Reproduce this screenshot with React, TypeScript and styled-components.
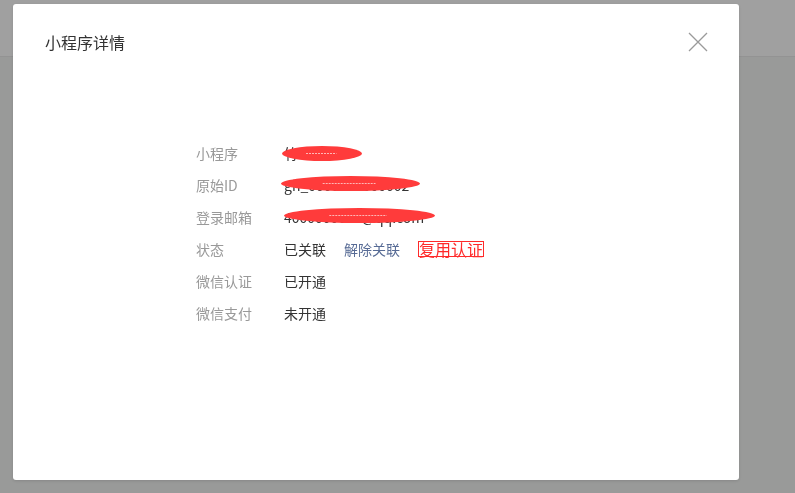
import React from 'react'
import styled, { createGlobalStyle } from 'styled-components'

const GlobalStyle = createGlobalStyle`
  html, body {
    margin: 0;
    padding: 0;
    height: 100%;
    background: #999a99;
    font-family: "Noto Sans CJK SC", "Noto Sans", "Liberation Sans", sans-serif;
  }
`

const PageHeader = styled.div`
  height: 56px;
  background: #a0a0a0;
  border-bottom: 1px solid #939393;
`

const Overlay = styled.div`
  position: fixed;
  inset: 0;
  padding: 4px 0 0 13px;
`

const Modal = styled.div`
  width: 726px;
  height: 476px;
  background: #fff;
  border-radius: 3px;
  box-shadow: 0 1px 3px rgba(0, 0, 0, 0.12);
  display: flex;
  flex-direction: column;
`

const ModalHeader = styled.div`
  display: flex;
  align-items: center;
  justify-content: space-between;
  padding: 26px 31px 0 32px;
  height: 24px;
`

const Title = styled.h3`
  margin: 0;
  font-size: 16px;
  font-weight: 400;
  color: #333;
`

const CloseButton = styled.button`
  border: none;
  background: none;
  padding: 0;
  width: 20px;
  height: 20px;
  cursor: pointer;
  display: flex;
`

const InfoList = styled.dl`
  margin: 83px 0 0 183px;
  padding: 0;
  display: grid;
  grid-template-columns: 88px auto;
  grid-auto-rows: 32px;
  align-items: center;
  font-size: 14px;
`

const Label = styled.dt`
  color: #999;
`

const Value = styled.dd`
  margin: 0;
  color: #333;
  display: flex;
  align-items: center;
`

const Masked = styled.span`
  position: relative;
  display: inline-block;
  color: #333;
  white-space: nowrap;
`

const Scribble = styled.svg<{ $w: number; $dx: number; $dy: number }>`
  position: absolute;
  left: ${p => p.$dx}px;
  top: ${p => p.$dy}px;
  width: ${p => p.$w}px;
  height: 15px;
  overflow: visible;
`

const LinkAction = styled.a`
  margin-left: 18px;
  color: #576b95;
  text-decoration: none;
  cursor: pointer;
`

const ReuseAction = styled.a`
  margin-left: 18px;
  color: #ff2a2a;
  font-size: 16px;
  line-height: 14px;
  height: 14px;
  border: 1px solid #ff2a2a;
  cursor: pointer;
`

function Redaction({ width, dx, dy }: { width: number; dx: number; dy: number }) {
  return (
    <Scribble $w={width} $dx={dx} $dy={dy} viewBox={`0 0 ${width} 15`}>
      <ellipse cx={width / 2} cy={7.5} rx={width / 2} ry={7.5} fill="#ff3b3b" />
      <line
        x1={width * 0.3}
        y1={7.5}
        x2={width * 0.68}
        y2={7.5}
        stroke="#ffd6d6"
        strokeWidth={0.8}
        strokeDasharray="2 1"
      />
    </Scribble>
  )
}

export default function App() {
  return (
    <>
      <GlobalStyle />
      <PageHeader />
      <Overlay>
        <Modal>
          <ModalHeader>
            <Title>小程序详情</Title>
            <CloseButton aria-label="关闭">
              <svg width="20" height="20" viewBox="0 0 20 20">
                <path d="M1 1L19 19M19 1L1 19" stroke="#9a9a9a" strokeWidth="1.3" fill="none" />
              </svg>
            </CloseButton>
          </ModalHeader>
          <InfoList>
            <Label>小程序</Label>
            <Value>
              <Masked>
                竹
                <Redaction width={80} dx={-2} dy={3} />
              </Masked>
            </Value>
            <Label>原始ID</Label>
            <Value>
              <Masked>
                gh_0000000000002
                <Redaction width={139} dx={-3} dy={1} />
              </Masked>
            </Value>
            <Label>登录邮箱</Label>
            <Value>
              <Masked>
                4000000000@qq.com
                <Redaction width={151} dx={0} dy={1} />
              </Masked>
            </Value>
            <Label>状态</Label>
            <Value>
              已关联
              <LinkAction>解除关联</LinkAction>
              <ReuseAction>复用认证</ReuseAction>
            </Value>
            <Label>微信认证</Label>
            <Value>已开通</Value>
            <Label>微信支付</Label>
            <Value>未开通</Value>
          </InfoList>
        </Modal>
      </Overlay>
    </>
  )
}
